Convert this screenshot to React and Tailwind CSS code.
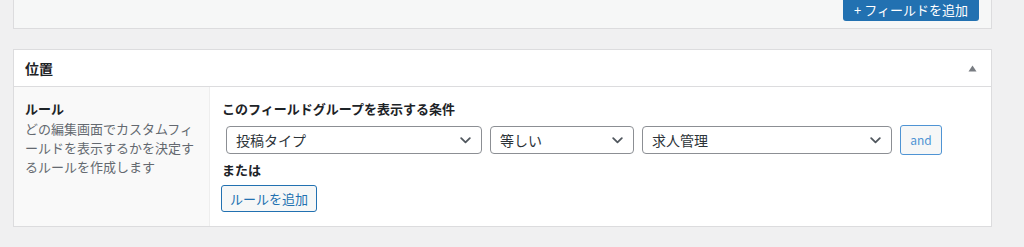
import React from "react";

const font = { fontFamily: '"Noto Sans CJK JP", "Noto Sans", sans-serif' };

function Chevron() {
  return (
    <svg width="11" height="7" viewBox="0 0 11 7" fill="none">
      <path d="M1.2 1.2 L5.5 5.3 L9.8 1.2" stroke="#50575e" strokeWidth="1.8" strokeLinecap="round" strokeLinejoin="round" />
    </svg>
  );
}

function Select({ label, className }) {
  return (
    <div className={`h-[28px] flex items-center justify-between border border-[#8c8f94] rounded-[4px] bg-white pl-[9px] pr-[10px] ${className}`}>
      <span className="text-[14px] text-[#2c3338] leading-none">{label}</span>
      <Chevron />
    </div>
  );
}

export default function App() {
  return (
    <div className="w-[1024px] h-[247px] bg-[#f0f0f1] overflow-hidden" style={font}>
      <div className="mx-[13px] w-[979px] -mt-[10px] h-[39px] bg-[#f6f7f7] border border-[#dcdcde] flex justify-end items-start pr-[12px]">
        <div className="h-[30px] w-[136px] bg-[#2271b1] rounded-[3px] flex items-center justify-center text-white text-[13px] pt-[8px]">
          + フィールドを追加
        </div>
      </div>

      <div className="mx-[13px] mt-[20px] w-[979px] h-[178px] bg-white border border-[#dcdcde] flex flex-col">
        <div className="h-[37px] flex items-center justify-between border-b border-[#dcdcde] pl-[11px] pr-[14px] shrink-0">
          <span className="text-[14px] font-bold text-[#1d2327] leading-none">位置</span>
          <svg width="9" height="7" viewBox="0 0 9 7"><path d="M4.5 0.5 L8.5 6.5 L0.5 6.5 Z" fill="#787c82" /></svg>
        </div>
        <div className="flex flex-1">
          <div className="w-[196px] bg-[#f9f9f9] border-r border-[#eeeeee] pl-[11px] pt-[13px] shrink-0">
            <div className="text-[13px] font-bold text-[#1d2327] leading-[18px]">ルール</div>
            <div className="text-[13px] text-[#646970] leading-[19px] mt-[1px]">
              <div>どの編集画面でカスタムフィ</div>
              <div>ールドを表示するかを決定す</div>
              <div>るルールを作成します</div>
            </div>
          </div>
          <div className="flex-1 pl-[12px] pt-[13px]">
            <div className="text-[13px] font-bold text-[#1d2327] leading-[18px]">このフィールドグループを表示する条件</div>
            <div className="flex items-center mt-[7px] pl-[4px]">
              <Select label="投稿タイプ" className="w-[256px]" />
              <Select label="等しい" className="w-[144px] ml-[8px]" />
              <Select label="求人管理" className="w-[250px] ml-[8px]" />
              <div className="ml-[8px] h-[30px] w-[42px] border border-[#4f94d4] rounded-[3px] bg-[#f6f7f7] flex items-center justify-center text-[12px] text-[#4f94d4] pb-[1px]">
                and
              </div>
            </div>
            <div className="text-[13px] font-bold text-[#1d2327] leading-[18px] mt-[6px]">または</div>
            <div className="mt-[6px] -ml-[1px] h-[27px] w-[96px] border border-[#2271b1] rounded-[3px] bg-[#f6f7f7] flex items-center justify-center text-[13px] text-[#2271b1]">
              ルールを追加
            </div>
          </div>
        </div>
      </div>
    </div>
  );
}
